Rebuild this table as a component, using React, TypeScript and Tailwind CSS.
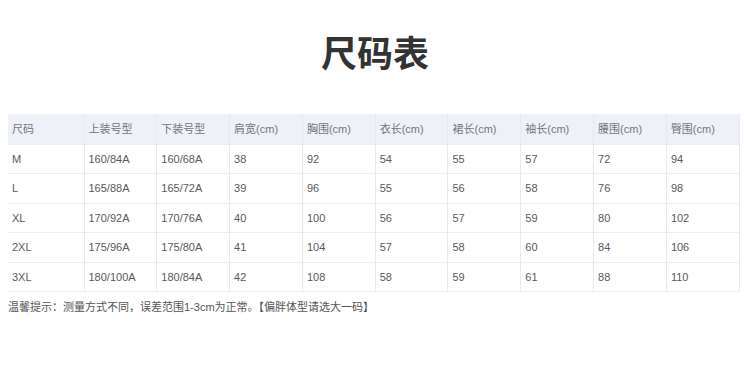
const headers = ['尺码', '上装号型', '下装号型', '肩宽(cm)', '胸围(cm)', '衣长(cm)', '裙长(cm)', '袖长(cm)', '腰围(cm)', '臀围(cm)']

const rows = [
  ['M', '160/84A', '160/68A', '38', '92', '54', '55', '57', '72', '94'],
  ['L', '165/88A', '165/72A', '39', '96', '55', '56', '58', '76', '98'],
  ['XL', '170/92A', '170/76A', '40', '100', '56', '57', '59', '80', '102'],
  ['2XL', '175/96A', '175/80A', '41', '104', '57', '58', '60', '84', '106'],
  ['3XL', '180/100A', '180/84A', '42', '108', '58', '59', '61', '88', '110'],
]

export default function App() {
  return (
    <div className="w-[750px] h-[374px] bg-white overflow-hidden font-['Liberation_Sans','Noto_Sans_CJK_SC',sans-serif]">
      {/* 标题 */}
      <div className="pt-[30px] h-[72px]">
        <h1 className="text-center text-[36px] leading-[42px] font-bold text-[#333] font-['Noto_Sans_CJK_SC',sans-serif]">
          尺码表
        </h1>
      </div>

      {/* 表格 */}
      <div className="mt-[42px] ml-[8px] w-[731px]">
        <table className="w-full table-fixed border-collapse text-[11px]">
          <colgroup>
            <col className="w-[76px]" />
            {headers.slice(1).map((h) => (
              <col key={h} className="w-[72.8px]" />
            ))}
          </colgroup>
          <thead>
            <tr className="h-[30px] bg-[#eef1f7]">
              {headers.map((h, i) => (
                <th
                  key={h}
                  className={`text-left font-normal text-[#777] pl-[4px] border-[#e6e9f1] ${i > 0 ? 'border-l' : ''} ${i === headers.length - 1 ? 'border-r' : ''}`}
                >
                  {h}
                </th>
              ))}
            </tr>
          </thead>
          <tbody>
            {rows.map((r) => (
              <tr key={r[0]} className="h-[29.6px] border-t border-[#eceef4]">
                {r.map((c, i) => (
                  <td
                    key={i}
                    className={`text-[#5a5a5a] pl-[4px] border-[#e6e9f1] ${i > 0 ? 'border-l' : ''} ${i === r.length - 1 ? 'border-r' : ''}`}
                  >
                    {c}
                  </td>
                ))}
              </tr>
            ))}
            <tr className="border-t border-[#eceef4]" />
          </tbody>
        </table>
      </div>

      {/* 提示 */}
      <p className="mt-[8px] ml-[8px] text-[11px] leading-[14px] text-[#555]">
        温馨提示：测量方式不同，误差范围1-3cm为正常。【偏胖体型请选大一码】
      </p>
    </div>
  )
}
